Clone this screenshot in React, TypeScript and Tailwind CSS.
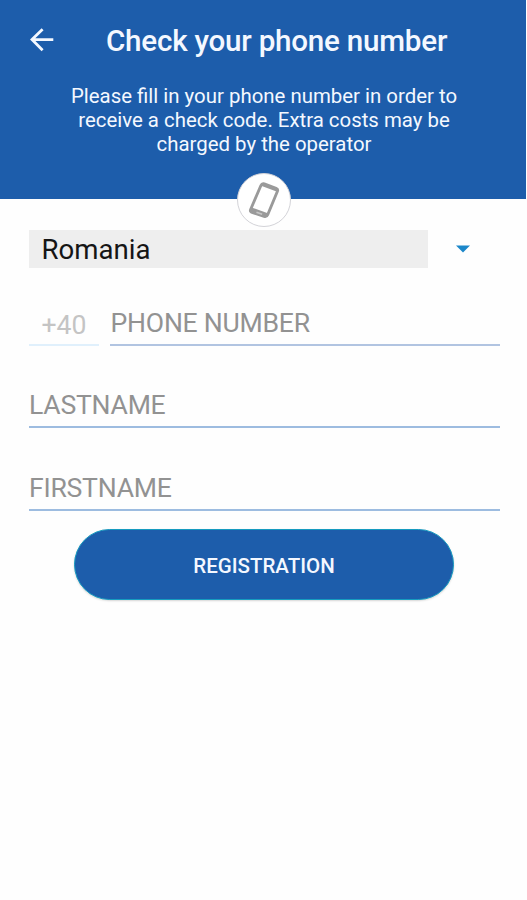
function BackArrow() {
  return (
    <svg width="24" height="24" viewBox="0 0 24 24" fill="none" stroke="#f4f8ff" strokeWidth="2.8">
      <path d="M23.3 11.6H2.2M12.6 1.2 2 11.6 12.6 22.2" />
    </svg>
  );
}

function PhoneBadge() {
  return (
    <div className="absolute left-[237px] top-[173px] flex size-[54px] items-center justify-center rounded-full border border-[#d3d3d8] bg-white">
      <svg width="54" height="54" viewBox="0 0 54 54" className="shrink-0">
        <g transform="translate(-2.6 -0.6) scale(1.06 1.02)">
          <path
            d="M28.2 11.2 39.3 15.5Q41.4 16.4 40.6 18.5L31.4 41.6Q30.4 44 28 43.2L16.6 39.3Q14.4 38.5 15.3 36.3L25 12.8Q26 10.4 28.2 11.2Z"
            fill="#fff"
            stroke="#9a9a9a"
            strokeWidth="2.7"
            strokeLinejoin="round"
          />
          <path d="M16.2 34.4 32.2 40.3 30 43.5 27.8 43.5 15.5 38.9Z" fill="#9a9a9a" />
          <path d="M26.4 11.8 40.4 17.2" stroke="#9a9a9a" strokeWidth="3.4" />
          <path d="M20.8 39 26.2 41" stroke="#c6c6c6" strokeWidth="1.6" />
        </g>
      </svg>
    </div>
  );
}

function Field({ label, className }: { label: string; className: string }) {
  return (
    <div className={`flex border-b-2 text-[26.6px] leading-8 text-[#929292] ${className}`}>
      <span className="whitespace-nowrap tracking-[-0.25px]">{label}</span>
    </div>
  );
}

export default function App() {
  return (
    <main className="relative h-[900px] w-[527px] overflow-hidden bg-[#fefefe] font-['Roboto',sans-serif]">
      <header className="h-[199px] w-[526px] bg-[#1d5dab] text-[#f4f8ff]">
        <div className="flex items-center pl-[30px] pt-[23px]">
          <button aria-label="Back" className="mt-[-2px]">
            <BackArrow />
          </button>
          <h1 className="ml-[52px] whitespace-nowrap text-[29.6px] font-medium leading-[36px] tracking-[-0.23px]">Check your phone number</h1>
        </div>
        <p className="mt-[25px] whitespace-nowrap pl-[2px] text-center text-[20.4px] leading-6">
          Please fill in your phone number in order to
          <br />
          receive a check code. Extra costs may be
          <br />
          charged by the operator
        </p>
      </header>
      <PhoneBadge />

      <form className="flex flex-col pl-[29px] pr-[27px]">
        <div className="mt-[31px] flex h-[38px] items-center">
          <div className="flex h-full w-[399px] items-center bg-[#eee] pl-[12.5px] pt-[2px] text-[27.6px] text-[#151515]">
            <span>Romania</span>
          </div>
          <svg width="14" height="8" viewBox="0 0 14 8" className="ml-7">
            <path d="M0 .5h14L7 7.5z" fill="#1c87c9" />
          </svg>
        </div>

        <div className="mt-[39px] flex h-[39px] items-end justify-between">
          <div className="flex h-[37px] w-[70px] border-b-2 border-[#e0f0fc] pl-[12.5px] text-[26.6px] leading-8 text-[#c4c4c4]">
            <span>+40</span>
          </div>
          <Field label="PHONE NUMBER" className="h-[39px] w-[390px] border-[#b1c4e1] pl-[0.6px]" />
        </div>
        <Field label="LASTNAME" className="mt-[43px] h-[39px] border-[#9dbce0]" />
        <Field label="FIRSTNAME" className="mt-[44px] h-[39px] border-[#9dbce0]" />

        <button
          type="button"
          className="ml-[45px] mt-[18px] h-[71px] w-[380px] rounded-full border border-[#169bc0] bg-[#1d5dab] pt-[4px] text-[20.5px] font-medium text-[#f4f8ff] shadow-[0_1px_2px_#d5d5d5]"
        >
          <span>REGISTRATION</span>
        </button>
      </form>
    </main>
  );
}
